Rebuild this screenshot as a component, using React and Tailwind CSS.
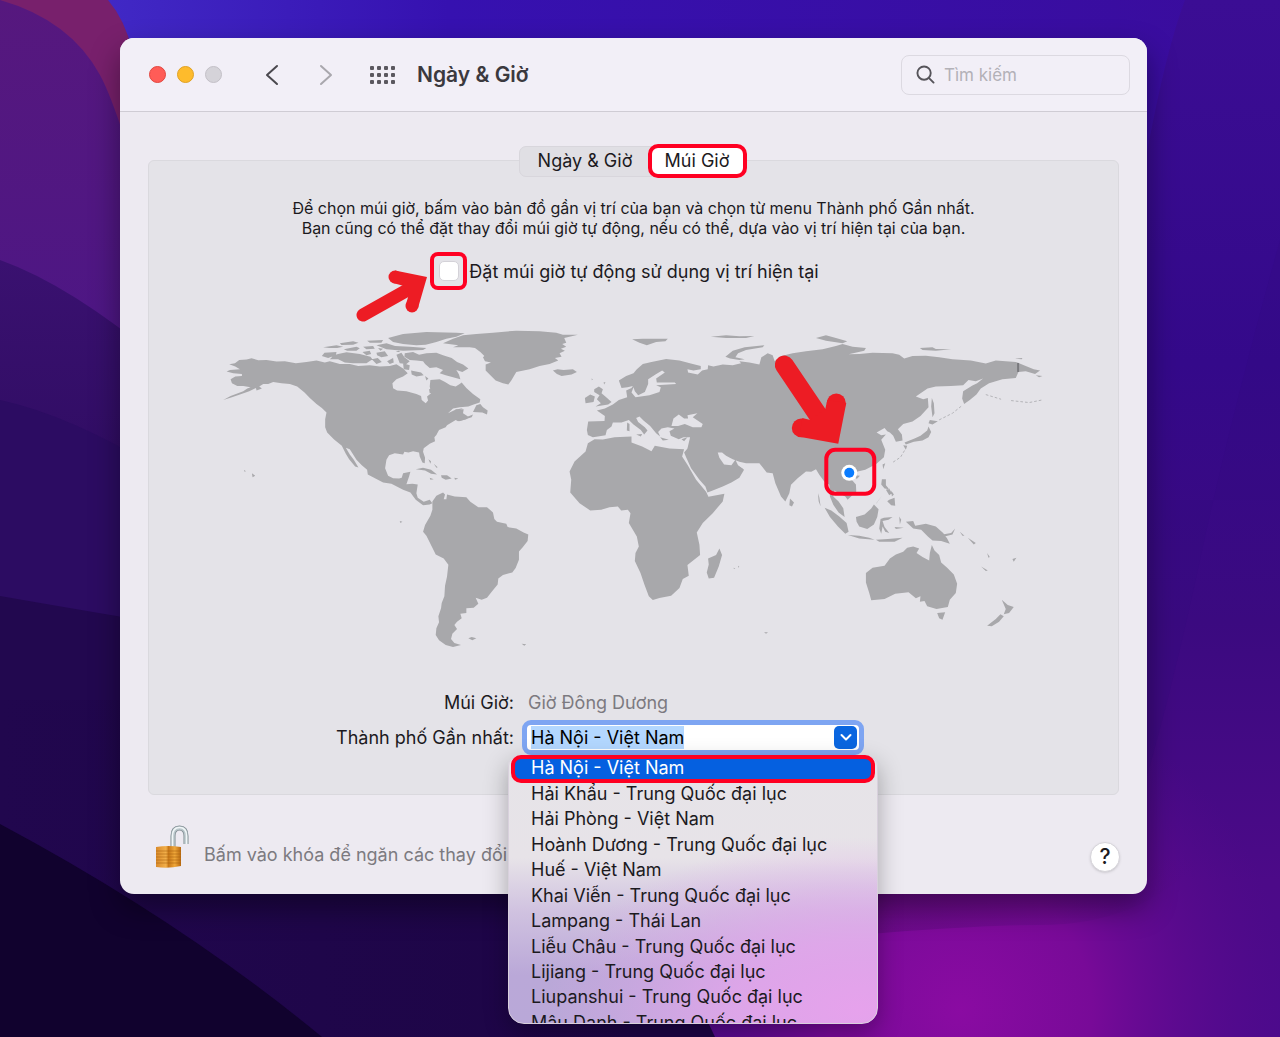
import React, { useEffect, useRef, useState } from "react";

const CITIES = [
  "Hà Nội - Việt Nam",
  "Hải Khẩu - Trung Quốc đại lục",
  "Hải Phòng - Việt Nam",
  "Hoành Dương - Trung Quốc đại lục",
  "Huế - Việt Nam",
  "Khai Viễn - Trung Quốc đại lục",
  "Lampang - Thái Lan",
  "Liễu Châu - Trung Quốc đại lục",
  "Lijiang - Trung Quốc đại lục",
  "Liupanshui - Trung Quốc đại lục",
  "Mậu Danh - Trung Quốc đại lục",
];

function Wallpaper() {
  return (
    <svg
      className="absolute inset-0 h-full w-full"
      viewBox="0 0 1280 1037"
      preserveAspectRatio="none"
      aria-hidden="true"
    >
      <defs>
        <linearGradient id="sky" x1="0" y1="0" x2="1" y2="0">
          <stop offset="0" stopColor="#4430cc" />
          <stop offset="0.35" stopColor="#3611b0" />
          <stop offset="1" stopColor="#3a0c9c" />
        </linearGradient>
        <linearGradient id="right" x1="0" y1="0" x2="0" y2="1">
          <stop offset="0" stopColor="#3b0d94" />
          <stop offset="0.35" stopColor="#34098a" />
          <stop offset="0.6" stopColor="#3b0a80" />
          <stop offset="0.85" stopColor="#4c0a88" />
          <stop offset="1" stopColor="#4c0a8c" />
        </linearGradient>
        <linearGradient id="leftTop" x1="0" y1="0" x2="0" y2="1">
          <stop offset="0" stopColor="#56187e" />
          <stop offset="1" stopColor="#4b1686" />
        </linearGradient>
        <linearGradient id="leftMid" x1="0" y1="0" x2="0" y2="1">
          <stop offset="0" stopColor="#3a1170" />
          <stop offset="1" stopColor="#2a0a5c" />
        </linearGradient>
        <linearGradient id="leftLow" x1="0" y1="0" x2="1" y2="0">
          <stop offset="0" stopColor="#21074e" />
          <stop offset="1" stopColor="#1d0546" />
        </linearGradient>
        <radialGradient id="magenta" cx="960" cy="1010" r="330" gradientUnits="userSpaceOnUse">
          <stop offset="0" stopColor="#8a0ba2" />
          <stop offset="0.4" stopColor="#780a98" />
          <stop offset="1" stopColor="#560a8c" stopOpacity="0" />
        </radialGradient>
        <linearGradient id="plum" x1="0" y1="0" x2="1" y2="0">
          <stop offset="0" stopColor="#640c74" />
          <stop offset="1" stopColor="#4c0a80" stopOpacity="0" />
        </linearGradient>
      </defs>
      <rect width="1280" height="1037" fill="url(#sky)" />
      <path d="M1185 0H1280V1037H500V500H1100Q1140 120 1185 0Z" fill="url(#right)" />
      <path d="M1280 240Q1230 420 1200 560T1140 800V500H1280Z" fill="#34097c" opacity=".2" />
      <rect x="500" y="640" width="780" height="397" fill="url(#magenta)" />
      <path d="M700 860H1200Q1140 925 1040 925T700 950Z" fill="url(#plum)" opacity=".8" />
      <path d="M0 0H108Q125 20 132 50L200 300H0Z" fill="#78206c" />
      <path d="M0 0Q70 20 100 75T200 420H0Z" fill="url(#leftTop)" />
      <path d="M0 260Q70 285 160 360V600H0Z" fill="url(#leftMid)" />
      <path d="M0 400Q70 415 160 470V700H0Z" fill="#2c0c62" />
      <path d="M0 596Q80 610 200 630V1037H0Z" fill="#22084f" />
      <path d="M0 700H640V1037H0Z" fill="url(#leftLow)" />
      <path d="M0 824Q180 920 322 1037H0Z" fill="#11022e" />
      <path d="M640 950Q690 980 715 1037H640Z" fill="#1d0546" />
    </svg>
  );
}

function WorldMap() {
  return (
    <svg
      className="block w-full"
      viewBox="149 320 970 350"
      role="img"
      aria-label="Bản đồ múi giờ"
    >
      <g fill="#a8a8ab">
        {/* North America, Greenland, Arctic islands */}
        <g transform="translate(210 320) scale(.33333)">
          <path d="M58 133L75 130 88 120 110 119 125 115 145 121 170 120 200 125 225 124 258 130 290 126 320 122 345 128 360 124 390 132 420 132 445 138 480 136 510 140 540 138 560 133 580 146 594 160 580 170 560 178 548 190 550 205 562 212 590 214 620 222 634 228 636 240 648 250 655 242 652 230 664 220 660 200 662 180 690 178 706 186 722 196 738 200 750 192 756 188 770 204 790 222 812 238 810 248 792 254 776 260 750 262 730 266 715 280 740 268 762 268 760 280 775 290 790 284 786 292 760 300 745 304 738 300 712 316 708 322 688 330 680 345 674 352 676 364 660 372 642 385 640 396 646 414 645 430 638 428 630 410 628 398 610 394 596 398 584 396 580 404 555 400 538 406 530 420 526 445 535 468 550 475 568 476 576 474 580 460 602 456 598 470 590 493 608 492 624 494 620 520 624 534 642 546 660 540 668 550 660 554 640 556 618 540 602 518 580 510 545 492 520 488 474 464 472 450 456 436 440 420 420 388 408 384 420 404 432 420 446 443 436 440 418 418 408 402 396 378 372 358 352 338 346 322 346 298 350 278 336 264 320 252 300 234 284 218 262 200 240 192 215 190 190 186 175 192 160 192 148 200 156 206 140 212 138 204 118 214 90 224 66 232 40 240 62 228 100 214 112 206 122 202 100 198 82 198 66 190 62 178 76 170 96 168 96 162 70 160 50 155 60 150 90 148 76 140Z" />
          <path d="M344 98L380 96 378 106 355 114 336 108ZM385 102L410 97 450 102 482 110 488 118 470 130 430 130 405 128 385 118 360 118 372 106ZM340 82L380 76 400 80 382 84 358 84ZM390 70L430 64 446 68 430 74 395 75ZM402 88L440 80 450 85 440 92 412 92ZM458 96L480 92 484 102 470 106ZM500 98L525 94 535 108 515 112 502 106ZM532 124L550 114 552 128 540 132ZM472 62L520 60 515 68 480 68ZM500 76L530 70 556 78 600 80 650 84 640 90 580 92 530 88ZM535 54L580 42 650 36 740 38 765 40 740 50 710 56 680 66 648 74 620 76 580 72 550 66ZM460 80L490 78 495 86 470 88ZM486 118L504 114 516 126 500 132ZM505 84L520 86 512 92ZM558 96L566 92 572 96Z" />
          <path d="M585 100L610 96 628 104 650 100 680 98 700 106 726 114 742 126 760 134 776 146 758 156 740 150 748 164 752 178 730 172 708 166 690 160 700 150 680 142 660 144 646 132 640 124 620 122 600 120 584 110ZM560 104L575 98 584 112 600 124 590 132 570 130ZM580 130L600 136 598 150 582 148ZM604 152L634 158 642 166 620 170 606 164ZM646 168L656 176 650 182ZM658 208L668 206 670 218 660 220Z" />
          <path d="M800 256L812 252 820 262 834 272 832 284 818 278 790 276ZM735 270L760 264 750 270ZM745 298L760 294 780 290 770 298 748 304Z" />
          <path d="M700 70L730 56 760 46 800 42 850 38 920 32 990 34 1040 38 1060 44 1105 44 1064 54 1070 68 1058 72 1070 80 1054 86 1066 92 1050 100 1056 110 1036 114 1046 122 1020 132 990 138 960 148 920 156 905 182 896 194 880 190 858 182 840 164 828 152 828 134 844 128 826 124 820 112 824 108 812 96 796 84 780 82 730 82 746 76Z" />
          <path d="M1030 152L1044 148 1062 150 1090 148 1102 156 1086 164 1056 168 1042 162Z" />
          <path d="M618 448L640 444 664 450 682 464 664 462 646 452ZM694 466L712 466 726 476 708 480 696 474ZM660 474L672 478 662 480ZM734 474L746 476 736 480ZM656 418L664 424 662 432ZM672 432L684 442 680 444ZM102 450L108 454 104 456ZM126 460L136 468 128 472Z" />
        </g>
        {/* South America */}
        <g transform="translate(400 460) scale(.33333)">
          <path d="M98 125L110 108 130 98 136 104 132 118 140 118 142 104 165 110 200 112 212 126 236 142 262 142 280 158 284 178 292 186 320 192 324 202 350 206 372 218 386 224 384 244 370 262 358 275 358 300 348 325 338 338 310 346 296 356 294 374 278 394 262 414 246 420 228 414 236 432 222 444 200 446 200 460 182 462 186 476 172 486 164 496 172 508 158 522 154 538 164 550 184 556 160 562 138 556 118 542 108 526 110 506 118 488 116 470 124 446 126 430 134 410 136 378 142 350 146 315 132 296 108 284 98 264 80 228 70 216 76 196 92 168 98 150Z" />
          <path d="M206 536L216 532 230 536 218 542ZM366 552L380 554 374 558ZM0 184L8 186 2 190Z" />
        </g>
        {/* Europe and Asia */}
        <g transform="translate(560 320) scale(.33333)">
          <path d="M85 345L82 330 86 305 135 303 136 288 112 272 136 266 160 254 178 240 203 232 200 212 216 204 220 198 204 202 186 204 178 182 200 168 222 160 232 148 250 132 276 126 320 117 360 122 400 132 424 138 424 148 402 152 384 148 386 158 415 164 428 152 445 148 446 136 462 140 490 134 520 136 545 130 540 124 570 128 600 134 606 112 625 100 640 106 646 124 666 108 700 100 740 94 790 88 830 78 850 72 880 80 920 84 915 92 868 103 900 102 940 98 1000 100 1020 104 1035 116 1060 108 1100 107 1140 112 1180 118 1235 122 1280 131 1310 122 1370 126 1400 138 1424 148 1443 152 1428 162 1400 154 1378 156 1370 174 1330 178 1290 190 1265 206 1252 224 1232 240 1215 252 1209 236 1212 214 1240 197 1254 190 1272 176 1250 184 1228 180 1212 196 1175 198 1130 200 1105 206 1070 230 1092 238 1106 234 1108 262 1084 288 1060 305 1032 312 1016 328 1028 344 1030 362 1010 366 1002 348 992 338 984 334 976 324 952 338 966 346 980 344 966 360 978 390 974 412 950 433 918 450 892 456 884 470 876 466 872 474 890 494 891 515 865 540 858 530 840 520 825 512 822 530 838 545 852 565 856 592 838 578 822 555 812 530 810 495 795 485 780 465 770 448 756 456 740 455 715 475 695 495 690 520 678 545 665 530 648 490 640 460 622 458 600 430 560 430 540 426 520 418 500 408 488 398 475 398 480 414 494 434 516 436 528 420 536 436 554 450 540 474 516 488 490 500 460 512 444 518 438 500 420 480 395 445 380 412 374 398 384 386 392 352 372 352 358 358 334 348 330 334 345 326 325 322 306 326 296 336 302 350 290 340 272 318 252 302 240 290 230 294 236 306 256 322 264 332 254 344 244 330 222 314 208 300 186 308 160 308 156 320 142 330 138 346 115 350 100 352Z" />
          <path d="M104 208L118 200 130 208 126 220 140 232 156 246 146 254 108 260 124 250 112 238 120 226 104 216ZM76 234L92 224 106 230 102 246 78 250ZM203 308L210 312 210 334 202 332ZM230 344L248 342 244 350ZM302 352L328 360 310 362ZM366 358L384 352 374 364ZM96 176L100 178 97 181ZM132 188L138 186 134 194Z" />
          <path d="M218 58L250 56 325 56 318 64 290 66 262 76 240 68ZM454 50L500 46 540 49 585 48 560 54 500 54ZM498 110L520 92 556 82 615 76 610 82 560 90 536 100 528 112 556 118 540 120 512 116ZM770 54L800 46 830 54 864 64 850 70 800 62ZM1082 84L1120 82 1130 87 1176 88 1130 92 1090 90ZM1368 116L1390 114 1388 118ZM1430 166L1450 168 1440 172Z" />
          <path d="M1118 234L1124 250 1126 280 1120 292 1116 260ZM1112 300L1136 304 1120 314 1108 310ZM1108 320L1116 336 1108 352 1090 362 1064 366 1040 374 1036 368 1066 356 1084 348 1104 332ZM1032 376L1044 378 1040 390ZM970 434L978 430 972 448ZM692 536L704 548 698 560 690 556ZM888 466L902 468 892 478ZM540 440L552 448 542 460Z" />
          <path d="M1140 300L1180 280 1210 256M1280 224L1326 238M1356 242L1410 248 1450 240M1036 392L1024 412 1000 428" fill="none" stroke="#b4b4b8" strokeWidth="3" strokeDasharray="8 6" />
          {/* maritime Southeast Asia */}
          <path d="M968 478L980 478 980 496 990 508 976 506 966 494ZM990 540L1006 534 1008 558 996 556 984 544ZM945 555L952 550 968 528 950 552ZM980 510L990 526 998 520 990 506ZM996 512L1004 524 998 530ZM890 592L916 584 936 566 944 554 958 568 954 592 944 614 924 628 900 620 892 606ZM796 564L816 572 840 590 862 610 868 636 858 642 836 620 812 592ZM866 646L900 648 930 654 946 660 900 656ZM950 660L986 658 1030 654 1006 666 960 666ZM964 598L974 594 1000 592 988 600 970 604 976 622 990 640 978 636 970 620 966 642 960 626ZM1020 590L1026 600 1022 614ZM1006 622L1034 624 1010 628ZM1040 606L1062 604 1068 618 1100 612 1130 620 1152 640 1164 656 1172 672 1146 664 1120 662 1106 650 1086 630 1062 626ZM1150 644L1176 640 1188 626 1180 644 1156 650ZM776 520L780 532 784 560 778 544Z" />
          {/* Oceania */}
          <path d="M920 760L940 744 976 738 992 716 1010 704 1032 696 1044 684 1062 680 1080 686 1072 700 1090 712 1110 722 1112 700 1118 676 1126 692 1140 706 1146 728 1164 744 1184 764 1194 792 1190 820 1172 840 1166 862 1132 868 1104 860 1096 844 1082 846 1084 830 1070 836 1048 818 1008 822 976 838 936 842 930 820 920 788ZM1134 880L1158 878 1150 900 1140 896ZM1328 840L1346 856 1364 862 1350 880 1334 884 1340 868ZM1324 884L1334 890 1320 906 1298 920 1284 918 1310 898ZM1266 740L1286 752 1280 754ZM1360 718L1372 714 1364 726ZM1202 636L1216 648 1210 648ZM1226 654L1250 670 1244 674ZM1284 700L1292 712 1288 714ZM614 938L626 938 620 942Z" />
        </g>
        {/* Africa */}
        <g transform="translate(560 430) scale(.33333)">
          <path d="M105 28L130 29 165 22 216 20 216 38 248 50 276 64 286 48 330 56 374 58 368 80 385 106 410 150 440 186 447 201 495 192 490 215 460 250 430 280 412 308 420 345 422 376 384 406 388 438 370 448 360 475 335 498 300 505 280 511 268 500 255 465 243 430 226 394 228 370 238 350 232 320 208 280 213 250 205 240 185 242 175 230 150 232 125 240 92 242 60 220 32 188 35 150 30 125 45 95 78 65 85 40Z" />
          <path d="M480 356L488 376 478 410 464 444 448 446 442 428 448 404 446 386 470 376ZM522 414L528 416 524 418ZM536 408L540 412 536 413Z" />
        </g>
      </g>
      {/* inland seas */}
      <g fill="#e4e3e8" transform="translate(560 320) scale(.33333)">
        <path d="M222 202L216 218 228 232 270 226 300 216 304 202 290 196 350 192 346 188 292 188 290 176 316 158 308 152 288 164 266 178 266 192 256 216 236 226 226 214Z" />
        <path d="M336 318L342 296 358 284 374 296 386 296 384 286 414 280 400 292 430 312 426 322 400 322 376 312 356 318Z" />
      </g>
      <rect x="1018" y="363" width="2" height="9" fill="#7a7a7e" />
      <circle cx="850" cy="473" r="8" fill="#fff" />
      <circle cx="850" cy="473" r="5" fill="#0a7cff" />
      {/* pointer to the selected city */}
      <g fill="#ed1c24">
        <path d="M785 365L824 423" stroke="#ed1c24" strokeWidth="19" strokeLinecap="round" />
        <circle cx="837" cy="403" r="9.5" />
        <circle cx="802" cy="428" r="9.5" />
        <path d="M839 444L847 403 828 400 826 409 811 420 803 418 800 437Z" />
      </g>
      <rect x="827" y="450" width="48" height="44" rx="9" fill="none" stroke="#ff0022" strokeWidth="4" />
    </svg>
  );
}

function LockIcon() {
  return (
    <svg className="h-[44px] w-[36px]" viewBox="0 0 36 44" aria-hidden="true">
      <defs>
        <linearGradient id="brass" x1="0" x2="1">
          <stop offset="0" stopColor="#d98a2b" />
          <stop offset="0.4" stopColor="#f3b04a" />
          <stop offset="0.5" stopColor="#c87818" />
          <stop offset="0.75" stopColor="#f0a83a" />
          <stop offset="1" stopColor="#b8690f" />
        </linearGradient>
      </defs>
      <path d="M18 22V11Q18 3 24.500 3T31 11V19" fill="none" stroke="#7d898e" strokeWidth="5" />
      <path d="M18 22V11Q18 3 24.500 3T31 11V19" fill="none" stroke="#b9c6ca" strokeWidth="3.500" />
      <path d="M17.500 22V11Q17.500 2.500 24.500 2.500T31.500 11V19" fill="none" stroke="#f1f6f7" strokeWidth="1.500" />
      <path d="M1 22Q13 20 26 22V41Q13 44 1 42Z" fill="url(#brass)" />
      <path d="M1 26H26M1 29H26M1 32H26M1 35H26M1 38H26" stroke="#a65e10" strokeOpacity=".55" />
    </svg>
  );
}

function TitleBar() {
  return (
    <header className="flex h-[74px] items-center rounded-t-[14px] border-b border-[#cfccd4] bg-[#f2eff7] pr-[17px] pl-[29px]">
      <div className="flex gap-[11px]">
        <button aria-label="Đóng" className="size-[17px] rounded-full border border-[#e2463f] bg-[#ff5c57]" />
        <button aria-label="Thu nhỏ" className="size-[17px] rounded-full border border-[#e0a123] bg-[#febb2c]" />
        <button aria-label="Phóng to" className="size-[17px] rounded-full border border-[#c3c0c7] bg-[#d5d3d9]" />
      </div>
      <button aria-label="Quay lại" className="ml-[40px] text-[#4a484e]">
        <svg className="h-[24px] w-[20px]" viewBox="0 0 20 24" fill="none" stroke="currentColor" strokeWidth="2">
          <path d="M15 3L5 12L15 21" strokeLinecap="round" strokeLinejoin="round" />
        </svg>
      </button>
      <button aria-label="Tiếp" className="ml-[34px] text-[#a9a7ad]">
        <svg className="h-[24px] w-[20px]" viewBox="0 0 20 24" fill="none" stroke="currentColor" strokeWidth="2">
          <path d="M5 3L15 12L5 21" strokeLinecap="round" strokeLinejoin="round" />
        </svg>
      </button>
      <button aria-label="Hiển thị tất cả" className="ml-[34px] grid grid-cols-4 gap-[3px]">
        {Array.from({ length: 12 }, (_, i) => (
          <span key={i} className="size-[4px] rounded-[1px] bg-[#5b585f]" />
        ))}
      </button>
      <h1 className="ml-[22px] text-[21px] font-semibold text-[#3b393e]">Ngày &amp; Giờ</h1>
      <label className="ml-auto flex h-[40px] w-[229px] items-center gap-[9px] rounded-[8px] border border-[#dcd9e1] px-[14px]">
        <svg className="size-[19px] shrink-0 text-[#56545a]" viewBox="0 0 20 20" fill="none" stroke="currentColor" strokeWidth="2">
          <circle cx="8.5" cy="8.5" r="7" />
          <path d="M14 14L18.500 18.500" strokeLinecap="round" />
        </svg>
        <input
          type="search"
          aria-label="Tìm kiếm"
          placeholder="Tìm kiếm"
          className="w-full min-w-0 bg-transparent pt-[2px] text-[17px] outline-none placeholder:text-[#b3b1b7]"
        />
      </label>
    </header>
  );
}

function CityPicker() {
  const [city, setCity] = useState(CITIES[0]);
  const inputRef = useRef(null);

  useEffect(() => {
    inputRef.current.focus();
    inputRef.current.select();
  }, []);

  return (
    <div className="relative w-[342px]">
      <div className="flex h-[35px] items-center rounded-[9px] border-[5px] border-[#7ea5f2] bg-white pr-[2px] pl-[4px]">
        <input
          id="city"
          ref={inputRef}
          value={city}
          onChange={(e) => setCity(e.target.value)}
          className="h-[23px] w-full min-w-0 bg-transparent text-[18px] text-black outline-none selection:bg-[#b3d7ff] selection:text-black"
        />
        <button aria-label="Mở danh sách" className="flex size-[23px] shrink-0 items-center justify-center rounded-[5px] bg-[#0a66e0]">
          <svg className="size-[12px]" viewBox="0 0 12 12" fill="none" stroke="#fff" strokeWidth="2">
            <path d="M1.500 4L6 8.500L10.500 4" strokeLinecap="round" strokeLinejoin="round" />
          </svg>
        </button>
      </div>

      {/* dropdown */}
      <div className="absolute top-[36px] -left-[14px] z-10 w-[370px]">
        <div className="h-[268px] overflow-hidden rounded-t-[10px] rounded-b-[16px] border border-[#d8d0dc] bg-[radial-gradient(ellipse_85%_65%_at_95%_95%,#e6a2ec_0%,#e2a5ebdd_40%,#dfa6ea55_75%,#dfa6ea00_100%),linear-gradient(180deg,#e6e4e8_0%,#e7e3e8_38%,#d0c2e0_58%,#baa8d8_82%,#b9a8d8_100%)] shadow-[0_8px_24px_rgba(0,0,0,0.3)]">
          <ul role="listbox" aria-label="Thành phố" className="-mt-px flex h-[280px] flex-col px-[6px]">
            {CITIES.map((name) => (
              <li
                key={name}
                role="option"
                aria-selected={name === city}
                onClick={() => setCity(name)}
                className={`flex flex-1 items-center rounded-[5px] pl-[16px] text-[18px] leading-[22px] whitespace-nowrap ${
                  name === city ? "bg-[#0560e0] text-white" : "text-[#1c1a1e]"
                }`}
              >
                {name}
              </li>
            ))}
          </ul>
        </div>
        <div className="pointer-events-none absolute -top-px left-[3px] h-[28px] w-[364px] rounded-[10px] border-4 border-[#ff0022]" />
      </div>
    </div>
  );
}

export default function App() {
  const [auto, setAuto] = useState(false);

  return (
    <div className="relative h-screen overflow-hidden bg-[#34098a] font-['Inter','Noto_Sans',sans-serif] text-[#1c1a1e]">
      <Wallpaper />
      <div className="relative pt-[38px] pr-[133px] pl-[120px]">
        <div className="rounded-[14px] bg-[#edeaf1] shadow-[0_14px_30px_rgba(0,0,0,0.4)]">
          <TitleBar />
          <main className="px-[28px] pt-[48px]">
            <section className="rounded-[6px] border border-[#dad9de] bg-[#e4e3e8] pb-[39px]">
              <div className="-mt-[17px] flex items-center justify-center pr-[2px]">
                <button className="-mr-[10px] h-[31px] w-[139px] rounded-[7px] border border-[#d8d6dc] bg-[#e0dfe4] pr-[6px] text-[18px] leading-[20px]">
                  Ngày &amp; Giờ
                </button>
                <button className="relative h-[34px] w-[99px] rounded-[10px] border-4 border-[#ff0022] bg-white text-[18px] leading-[20px]">
                  Múi Giờ
                </button>
              </div>
              <p className="mt-[20px] text-center text-[16px] leading-[20px]">
                Để chọn múi giờ, bấm vào bản đồ gần vị trí của bạn và chọn từ menu Thành phố Gần nhất.
                <br />
                Bạn cũng có thể đặt thay đổi múi giờ tự động, nếu có thể, dựa vào vị trí hiện tại của bạn.
              </p>
              <div className="mt-[14px] flex justify-center pr-[18px]">
                <label className="relative flex items-center gap-[2px] text-[18px]">
                  <span className="flex h-[38px] w-[37px] items-center justify-center rounded-[8px] border-4 border-[#ff0022]">
                    <input
                      type="checkbox"
                      checked={auto}
                      onChange={(e) => setAuto(e.target.checked)}
                      className="size-[20px] appearance-none rounded-[5px] border border-[#d4d2d8] bg-white checked:bg-[#0560e0]"
                    />
                  </span>
                  Đặt múi giờ tự động sử dụng vị trí hiện tại
                  <svg className="absolute top-[18px] -left-[74px] h-[52px] w-[72px]" viewBox="356 270 72 52" fill="#ed1c24" aria-hidden="true">
                    <path d="M363 315L411 288" stroke="#ed1c24" strokeWidth="13" strokeLinecap="round" />
                    <circle cx="395" cy="277" r="6.500" />
                    <circle cx="412" cy="306" r="6.500" />
                    <path d="M427 277L395 270.500 393 283 404 286 409 294 406 304 418 308Z" />
                  </svg>
                </label>
              </div>
              <div className="mt-[30px]">
                <WorldMap />
              </div>
              <div className="mt-[18px] grid grid-cols-[365px_1fr] gap-x-[8px] text-[18px]">
                <span className="text-right leading-[30px]">Múi Giờ:</span>
                <span className="pl-[6px] leading-[30px] text-[#7c7a80]">Giờ Đông Dương</span>
                <label htmlFor="city" className="mt-[2px] text-right leading-[35px]">
                  Thành phố Gần nhất:
                </label>
                <div className="mt-[2px]">
                  <CityPicker />
                </div>
              </div>
            </section>
          </main>
          <footer className="flex h-[99px] items-center pt-[5px] pr-[27px] pl-[35px]">
            <LockIcon />
            <p className="mt-[16px] ml-[13px] text-[18px] text-[#7c7a80]">Bấm vào khóa để ngăn các thay đổi</p>
            <button
              aria-label="Trợ giúp"
              className="mt-[20px] ml-auto size-[30px] rounded-full border border-[#d6d4da] bg-white text-[21px] leading-[26px] font-medium shadow-sm"
            >
              ?
            </button>
          </footer>
        </div>
      </div>
    </div>
  );
}
